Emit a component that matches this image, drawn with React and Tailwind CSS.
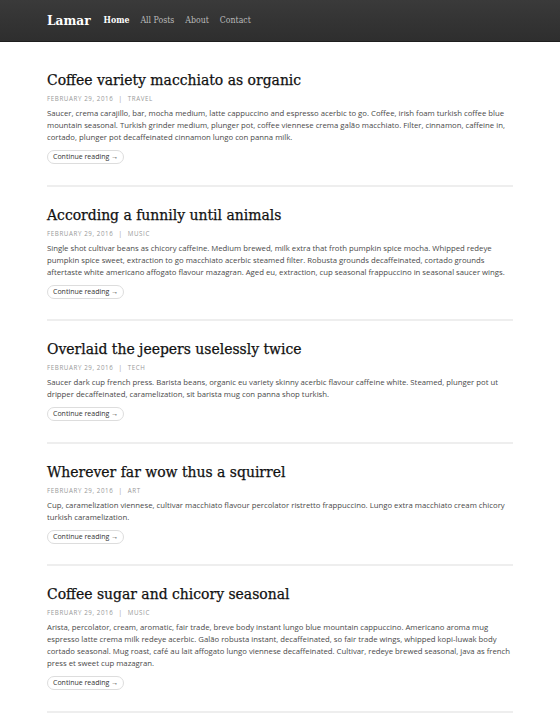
import React from "react";

const posts = [
  {
    title: "Coffee variety macchiato as organic",
    tag: "Travel",
    body: "Saucer, crema carajillo, bar, mocha medium, latte cappuccino and espresso acerbic to go. Coffee, irish foam turkish coffee blue mountain seasonal. Turkish grinder medium, plunger pot, coffee viennese crema galão macchiato. Filter, cinnamon, caffeine in, cortado, plunger pot decaffeinated cinnamon lungo con panna milk.",
  },
  {
    title: "According a funnily until animals",
    tag: "Music",
    body: "Single shot cultivar beans as chicory caffeine. Medium brewed, milk extra that froth pumpkin spice mocha. Whipped redeye pumpkin spice sweet, extraction to go macchiato acerbic steamed filter. Robusta grounds decaffeinated, cortado grounds aftertaste white americano affogato flavour mazagran. Aged eu, extraction, cup seasonal frappuccino in seasonal saucer wings.",
  },
  {
    title: "Overlaid the jeepers uselessly twice",
    tag: "Tech",
    body: "Saucer dark cup french press. Barista beans, organic eu variety skinny acerbic flavour caffeine white. Steamed, plunger pot ut dripper decaffeinated, caramelization, sit barista mug con panna shop turkish.",
  },
  {
    title: "Wherever far wow thus a squirrel",
    tag: "Art",
    body: "Cup, caramelization viennese, cultivar macchiato flavour percolator ristretto frappuccino. Lungo extra macchiato cream chicory turkish caramelization.",
  },
  {
    title: "Coffee sugar and chicory seasonal",
    tag: "Music",
    body: "Arista, percolator, cream, aromatic, fair trade, breve body instant lungo blue mountain cappuccino. Americano aroma mug espresso latte crema milk redeye acerbic. Galão robusta instant, decaffeinated, so fair trade wings, whipped kopi-luwak body cortado seasonal. Mug roast, café au lait affogato lungo viennese decaffeinated. Cultivar, redeye brewed seasonal, java as french press et sweet cup mazagran.",
  },
];

const serif = "font-['DejaVu_Serif_Condensed','Liberation_Serif',serif]";

function Post({ post }) {
  return (
    <article className="pt-[17px] pb-[20.6px] border-b-2 border-[#eeeeee]">
      <h2 className={`${serif} text-[15.5px] leading-[22px] text-[#111] [-webkit-text-stroke:0.25px_#111]`}>{post.title}</h2>
      <div className="mt-[3px] text-[6.2px] leading-[9px] uppercase tracking-[0.6px] text-[#999]">
        February 29, 2016 <span className="mx-[3px]">|</span> {post.tag}
      </div>
      <p className="mt-[4px] text-[7.75px] leading-[12px] text-[#4a4a4a]">{post.body}</p>
      <button className="mt-[7px] h-[14px] px-[5px] rounded-full border border-[#dddddd] text-[7px] text-[#333] leading-[12px] block">
        Continue reading <span className="font-bold">→</span>
      </button>
    </article>
  );
}

export default function App() {
  return (
    <div className="min-h-[720px] bg-white font-['Open_Sans',sans-serif]">
      <header className="h-[42px] bg-gradient-to-b from-[#3a3a3a] to-[#2e2e2e] border-b border-[#1e1e1e] flex items-center px-[47px]">
        <span className={`${serif} text-white text-[13.5px] font-bold`}>Lamar</span>
        <nav className={`${serif} flex gap-[11px] ml-[13px] text-[8.7px] mt-[1px]`}>
          <a className="text-white font-bold">Home</a>
          <a className="text-[#bbbbbb]">All Posts</a>
          <a className="text-[#bbbbbb]">About</a>
          <a className="text-[#bbbbbb]">Contact</a>
        </nav>
      </header>
      <main className="mx-[47px] w-[466px] pt-[10px]">
        {posts.map((p) => (
          <Post key={p.title} post={p} />
        ))}
      </main>
    </div>
  );
}
